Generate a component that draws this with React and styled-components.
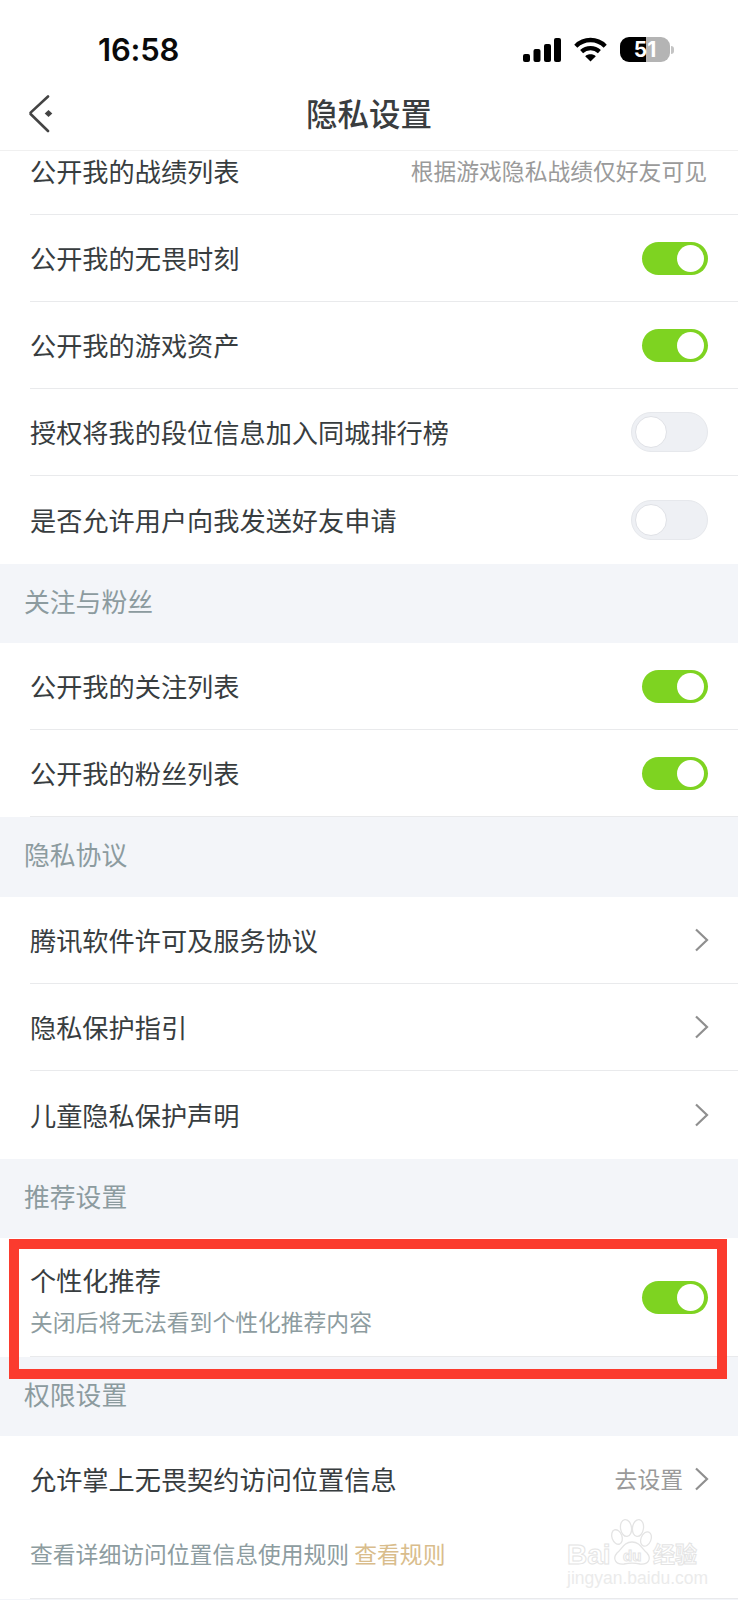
import React from "react";
import styled, { createGlobalStyle } from "styled-components";

const cjk = '"Noto Sans CJK SC", "Liberation Sans", sans-serif';

const Global = createGlobalStyle`
  html, body { margin: 0; padding: 0; background: #f3f5f9; }
  * { box-sizing: border-box; }
`;

const Page = styled.div`
  position: relative;
  width: 738px;
  height: 1600px;
  overflow: hidden;
  background: #f3f5f9;
  font-family: ${cjk};
  color: #333a3c;
`;

const StatusBar = styled.div`
  height: 90px;
  background: #fff;
  display: flex;
  align-items: flex-start;
  justify-content: space-between;
  padding: 30px 64px 0 98px;
`;

const Time = styled.div`
  font-family: Inter, "Liberation Sans", sans-serif;
  font-size: 31px;
  font-weight: 600;
  line-height: 40px;
  letter-spacing: -0.2px;
  color: #0a0a0a;
`;

const StatusIcons = styled.div`
  display: flex;
  align-items: center;
  gap: 13px;
  padding-top: 7px;
`;

const Battery = styled.div`
  position: relative;
  width: 50px;
  height: 25px;
  border-radius: 9px;
  overflow: hidden;
  background: linear-gradient(90deg, #000 0 26px, #b4b4b4 26px);
  color: #fff;
  font-family: Inter, "Liberation Sans", sans-serif;
  font-size: 21px;
  font-weight: 700;
  line-height: 25px;
  text-align: center;
`;

const BatteryWrap = styled.div`
  display: flex;
  align-items: center;
  gap: 1px;
`;

const BatteryCap = styled.div`
  width: 3px;
  height: 8px;
  border-radius: 0 3px 3px 0;
  background: #c4c4c4;
`;

const Nav = styled.div`
  height: 61px;
  padding-bottom: 15px;
  background: #fff;
  border-bottom: 1px solid #f0f0f0;
  display: grid;
  grid-template-columns: 1fr auto 1fr;
  align-items: center;
`;

const BackButton = styled.div`
  padding: 2px 0 0 28px;
  display: flex;
`;

const Title = styled.div`
  font-size: 31.5px;
  font-weight: 500;
  line-height: 44px;
  color: #3a3d3f;
  padding-bottom: 3px;
`;

const Section = styled.div`
  background: #fff;
`;

const Row = styled.div`
  position: relative;
  height: ${p => p.$h || 87}px;
  padding: ${p => p.$pad || "0 30px 0 0"};
  margin-left: 30px;
  display: flex;
  align-items: ${p => p.$align || "center"};
  justify-content: space-between;
  border-bottom: ${p => (p.$noLine ? "none" : "1px solid #e9eaec")};
`;

const Label = styled.div`
  font-size: 26.2px;
  line-height: 36px;
  font-weight: 400;
  color: #383d3f;
`;

const Hint = styled.div`
  font-size: 22.8px;
  line-height: 32px;
  color: #9a9a9a;
  margin-top: ${p => p.$mt || 0}px;
  margin-right: ${p => p.$mr || 0}px;
`;

const Sub = styled.div`
  font-size: 22.8px;
  line-height: 32px;
  color: #8d9ca0;
  margin-top: ${p => p.$mt || 0}px;
`;

const RuleLink = styled.span`
  color: #d9bd8c;
`;

const Stack = styled.div`
  display: flex;
  flex-direction: column;
  padding-top: ${p => p.$pt || 0}px;
`;

const GroupTitle = styled.div`
  height: ${p => p.$h || 79}px;
  padding: 0 0 7px 24px;
  display: flex;
  align-items: center;
  font-size: 25.8px;
  color: #8c9b9f;
`;

const Track = styled.div`
  flex: none;
  width: ${p => (p.$on ? 66 : 77)}px;
  height: ${p => (p.$on ? 33 : 40)}px;
  border-radius: 20px;
  background: ${p => (p.$on ? "#7ed321" : "#eef0f4")};
  border: ${p => (p.$on ? "none" : "1px solid #e6e8ec")};
  display: flex;
  align-items: center;
  justify-content: ${p => (p.$on ? "flex-end" : "flex-start")};
  padding: ${p => (p.$on ? "0 4px" : "0 3px")};
`;

const Knob = styled.div`
  width: ${p => (p.$on ? 27 : 32)}px;
  height: ${p => (p.$on ? 27 : 32)}px;
  border-radius: 50%;
  background: #fff;
  border: ${p => (p.$on ? "none" : "1px solid #dfe1e6")};
`;

const Trailing = styled.div`
  display: flex;
  align-items: center;
  gap: 11px;
  padding-top: 2px;
  margin-right: -1px;
`;

const ChevronSlot = styled.div`
  display: flex;
  margin-right: -1px;
`;

const Highlight = styled.div`
  position: absolute;
  left: -21px;
  top: 1px;
  width: 718px;
  height: 140px;
  border: 10px solid #fb3b2e;
  pointer-events: none;
`;

const Watermark = styled.div`
  position: absolute;
  left: 566px;
  top: 1518px;
  width: 134px;
  height: 68px;
  pointer-events: none;
`;

const MarkWord = styled.span`
  position: absolute;
  left: ${p => p.$x}px;
  top: ${p => p.$y}px;
  font-family: ${p => (p.$cjk ? cjk : '"Liberation Sans", sans-serif')};
  font-size: ${p => p.$size}px;
  font-weight: 700;
  line-height: 1;
  color: #fff;
  -webkit-text-stroke: 1px #e4e4e4;
  white-space: nowrap;
`;

const MarkUrl = styled.span`
  position: absolute;
  left: 1px;
  bottom: 0;
  font-family: "Liberation Sans", sans-serif;
  font-size: 17.5px;
  line-height: 16px;
  color: #ebebeb;
  white-space: nowrap;
`;

const Signal = () => (
  <svg width="38" height="24" viewBox="0 0 38 24" fill="#000">
    <rect x="0" y="16" width="7" height="8" rx="2" />
    <rect x="10.5" y="11" width="7" height="13" rx="2" />
    <rect x="21" y="6" width="7" height="18" rx="2" />
    <rect x="31" y="0" width="7" height="24" rx="2" />
  </svg>
);

const Wifi = () => (
  <svg width="33" height="25" viewBox="0 0 33 25" fill="none" stroke="#000" strokeWidth="4.4">
    <path d="M1.8 9.2C10 1 23 1 31.2 9.2" />
    <path d="M7.6 14.6C12.6 10 20.4 10 25.4 14.6" />
    <path d="M16.5 24.5 L11.2 19.2 C14 16.6 19 16.6 21.8 19.2 Z" fill="#000" stroke="none" />
  </svg>
);

const Back = () => (
  <svg width="26" height="40" viewBox="0 0 26 40" fill="none">
    <path d="M20 1.5 L2.6 17.6 M2.6 19 L20 36" stroke="#444" strokeWidth="2.6" strokeLinecap="round" />
    <path d="M20.5 15 L24.3 18.5 L20.5 22 L16.7 18.5 Z" fill="#444" />
  </svg>
);

const Chevron = () => (
  <svg width="15" height="24" viewBox="0 0 15 24" fill="none">
    <path d="M2 1.5 L13 12 L2 22.5" stroke="#8f8f8f" strokeWidth="2.2" />
  </svg>
);

const Paw = () => (
  <svg width="134" height="50" viewBox="0 0 134 50" fill="#fff" stroke="#e4e4e4" strokeWidth="1.3"
    style={{ position: "absolute", left: 0, top: 0 }}>
    <ellipse cx="51" cy="19" rx="5" ry="7.5" transform="rotate(-20 51 19)" />
    <ellipse cx="60" cy="10" rx="5.5" ry="8.5" transform="rotate(-8 60 10)" />
    <ellipse cx="72" cy="10" rx="5.5" ry="8.5" transform="rotate(8 72 10)" />
    <ellipse cx="80" cy="21" rx="5" ry="7.5" transform="rotate(22 80 21)" />
    <path d="M66 24 C58 24 56 31 51 35 C46 41 50 47 58 46 C63 45 69 45 74 46 C82 47 86 41 81 35 C76 31 74 24 66 24 Z" />
  </svg>
);

const Toggle = ({ on }) => (
  <Track $on={on}>
    <Knob $on={on} />
  </Track>
);

const ToggleRow = ({ label, on, noLine, h }) => (
  <Row $noLine={noLine} $h={h}>
    <Label>{label}</Label>
    <Toggle on={on} />
  </Row>
);

const LinkRow = ({ label, noLine, h }) => (
  <Row $noLine={noLine} $h={h}>
    <Label>{label}</Label>
    <ChevronSlot><Chevron /></ChevronSlot>
  </Row>
);

export default function App() {
  return (
    <Page>
      <Global />
      <StatusBar>
        <Time>16:58</Time>
        <StatusIcons>
          <Signal />
          <Wifi />
          <BatteryWrap>
            <Battery>51</Battery>
            <BatteryCap />
          </BatteryWrap>
        </StatusIcons>
      </StatusBar>
      <Nav>
        <BackButton><Back /></BackButton>
        <Title>隐私设置</Title>
        <div />
      </Nav>
      <Section>
        <Row $h={64} $align="flex-start" $pad="2px 30px 0 0">
          <Label>公开我的战绩列表</Label>
          <Hint $mt={2} $mr={1}>根据游戏隐私战绩仅好友可见</Hint>
        </Row>
        <ToggleRow label="公开我的无畏时刻" on />
        <ToggleRow label="公开我的游戏资产" on />
        <ToggleRow label="授权将我的段位信息加入同城排行榜" />
        <ToggleRow label="是否允许用户向我发送好友申请" noLine h={88} />
      </Section>
      <GroupTitle>关注与粉丝</GroupTitle>
      <Section>
        <ToggleRow label="公开我的关注列表" on />
        <ToggleRow label="公开我的粉丝列表" on />
      </Section>
      <GroupTitle $h={80}>隐私协议</GroupTitle>
      <Section>
        <LinkRow label="腾讯软件许可及服务协议" />
        <LinkRow label="隐私保护指引" />
        <LinkRow label="儿童隐私保护声明" noLine h={88} />
      </Section>
      <GroupTitle>推荐设置</GroupTitle>
      <Section>
        <Row $h={119}>
          <Stack $pt={5}>
            <Label>个性化推荐</Label>
            <Sub $mt={8}>关闭后将无法看到个性化推荐内容</Sub>
          </Stack>
          <Toggle on />
          <Highlight />
        </Row>
      </Section>
      <GroupTitle>权限设置</GroupTitle>
      <Section>
        <Row $h={163} $align="flex-start" $pad="25px 30px 0 0">
          <Stack>
            <Label>允许掌上无畏契约访问位置信息</Label>
            <Sub $mt={41}>查看详细访问位置信息使用规则 <RuleLink>查看规则</RuleLink></Sub>
          </Stack>
          <Trailing>
            <Hint>去设置</Hint>
            <Chevron />
          </Trailing>
        </Row>
      </Section>
      <Watermark>
        <Paw />
        <MarkWord $x={1} $y={23} $size={28}>Bai</MarkWord>
        <MarkWord $x={57} $y={30} $size={15}>du</MarkWord>
        <MarkWord $x={87} $y={23} $size={22} $cjk>经验</MarkWord>
        <MarkUrl>jingyan.baidu.com</MarkUrl>
      </Watermark>
    </Page>
  );
}
